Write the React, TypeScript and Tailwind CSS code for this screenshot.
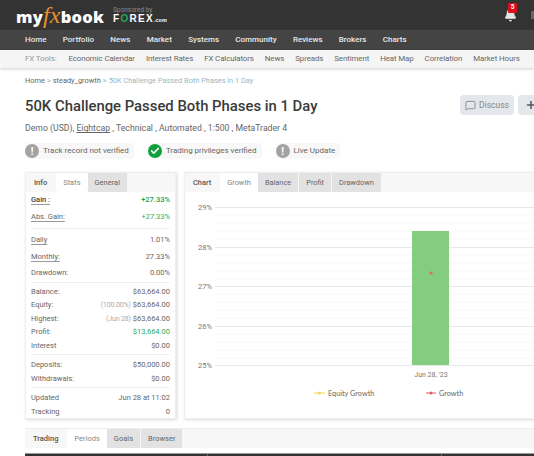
import React from 'react';
import { Bell, MessageSquare, Plus, Check } from 'lucide-react';

const mainNav = ['Home', 'Portfolio', 'News', 'Market', 'Systems', 'Community', 'Reviews', 'Brokers', 'Charts'];
const tools = ['Economic Calendar', 'Interest Rates', 'FX Calculators', 'News', 'Spreads', 'Sentiment', 'Heat Map', 'Correlation', 'Market Hours'];

function Tab({ label, kind }: { label: string; kind: 'title' | 'active' | 'idle' }) {
    if (kind === 'title') return <div className="h-full pl-[8px] pr-[9px] flex items-center font-medium text-[#555]">{label}</div>;
    if (kind === 'active') return <div className="h-full px-[7px] flex items-center bg-white text-[#888]">{label}</div>;
    return <div className="h-full px-[7px] flex items-center bg-[#e2e2e2] text-[#666] mr-px">{label}</div>;
}

function Row({ label, value, under, tone, note, h = 'h-[13.5px]', bold }: { label: string; value: string; under?: boolean; tone?: string; note?: string; h?: string; bold?: boolean }) {
    return (
        <div className={`flex items-center justify-between ${h}`}>
            <span className={`${under ? 'underline underline-offset-2 decoration-[#999]' : ''} ${bold ? 'font-medium text-[#444]' : 'text-[#666]'}`}>{label}</span>
            <span className={tone ?? 'text-[#666]'}>
                {note && <span className="text-[#aaa] text-[7px] tracking-[-0.15px] mr-[2px]">{note}</span>}
                {value}
            </span>
        </div>
    );
}

function Badge({ ok, children }: { ok?: boolean; children: React.ReactNode }) {
    return (
        <div className="flex items-center h-[16px] gap-[4px] bg-[#f8f8f8] pr-[5px] rounded-sm text-[8px] text-[#666] whitespace-nowrap">
            <span className={`size-[14px] rounded-full flex items-center justify-center text-white font-bold text-[10px] ${ok ? 'bg-[#10a03c]' : 'bg-[#a3a3a3]'}`}>
                {ok ? <Check size={10} strokeWidth={4} /> : '!'}
            </span>
            {children}
        </div>
    );
}

function GrowthChart() {
    const ticks = [
        { y: 34, label: '29%' },
        { y: 74, label: '28%' },
        { y: 113, label: '27%' },
        { y: 153, label: '26%' },
        { y: 192, label: '25%' },
    ];
    return (
        <svg width="356" height="228" className="block">
            {ticks.slice(0, 4).map((t, i) => (
                <g key={i} stroke="#f8f8f8">
                    <line x1="30" x2="356" y1={t.y + 8} y2={t.y + 8} />
                    <line x1="30" x2="356" y1={t.y + 16} y2={t.y + 16} />
                    <line x1="30" x2="356" y1={t.y + 24} y2={t.y + 24} />
                    <line x1="30" x2="356" y1={t.y + 32} y2={t.y + 32} />
                </g>
            ))}
            {ticks.map(t => (
                <g key={t.label}>
                    <line x1="30" x2="356" y1={t.y + 0.5} y2={t.y + 0.5} stroke="#e6e9e9" />
                    <text x="27" y={t.y + 3} textAnchor="end" fontSize="7.5" fill="#777" fontFamily="Roboto, sans-serif">{t.label}</text>
                </g>
            ))}
            <rect x="227" y="58" width="37" height="134" fill="#84cd80" />
            <circle cx="246" cy="100" r="1.6" fill="#d9705a" />
            <text x="246" y="204" textAnchor="middle" fontSize="7" fill="#777" fontFamily="Roboto, sans-serif">Jun 28, '23</text>
            <line x1="129" x2="140" y1="220" y2="220" stroke="#f2d55c" />
            <circle cx="134.5" cy="220" r="1.5" fill="#f2d55c" />
            <text x="143" y="223" fontSize="7.3" fill="#666" fontFamily="Lato, sans-serif">Equity Growth</text>
            <line x1="241" x2="251" y1="220" y2="220" stroke="#e0566a" />
            <circle cx="246" cy="220" r="1.5" fill="#e0566a" />
            <text x="254" y="223" fontSize="7.3" fill="#666" fontFamily="Lato, sans-serif">Growth</text>
        </svg>
    );
}

export default function App() {
    return (
        <div className="w-[534px] h-[456px] overflow-hidden bg-white font-['Roboto',sans-serif]">
            <header className="h-[30px] bg-[#333333] flex items-center pl-[16px] relative">
                <div className="w-[87px] font-['Open_Sans',sans-serif] font-extrabold text-[16.5px] tracking-[0.2px] text-white leading-none whitespace-nowrap">
                    my<span className="text-[#e8922a] italic font-['Liberation_Serif',serif] font-normal text-[24px] leading-none">fx</span>book
                </div>
                <div className="ml-[10px] flex flex-col whitespace-nowrap">
                    <span className="text-[6.5px] leading-[8px] text-[#8a8a8a]">Sponsored by</span>
                    <span className="text-[10px] leading-[10px] font-bold text-white tracking-[1.3px] font-['Liberation_Sans',sans-serif]">
                        F<span className="text-[#26a65b]">O</span>REX<span className="text-[5.5px] tracking-normal">.com</span>
                    </span>
                </div>
                <div className="absolute left-[504px] top-[9px]">
                    <Bell size={13} className="text-[#e5e5e5] fill-[#e5e5e5]" />
                    <span className="absolute -top-[6px] left-[4px] w-[9px] h-[10px] bg-[#d9101c] rounded-[1px] text-white text-[6.5px] font-bold flex items-center justify-center">5</span>
                </div>
                <div className="absolute left-[531px] top-[11px] w-[4px] h-[8px] bg-[#666]" />
            </header>

            <nav className="h-[20px] bg-[#444444] flex items-center pl-[25px] gap-[16.3px] text-[8px] font-medium text-[#e8e8e8] whitespace-nowrap">
                {mainNav.map(n => <span key={n}>{n}</span>)}
            </nav>

            <div className="h-[18px] bg-[#f5f5f5] shadow-[0_1px_3px_rgba(0,0,0,0.2)] flex items-center pl-[25px] text-[7.9px] tracking-[-0.1px] text-[#666] whitespace-nowrap">
                <span className="text-[#999] mr-[12px]">FX Tools:</span>
                <div className="flex gap-[11px]">
                    {tools.map(t => <span key={t}>{t}</span>)}
                </div>
            </div>

            <div className="pl-[25px] pt-[4px] h-[21px] text-[7.4px] text-[#666] whitespace-nowrap flex items-center gap-[2px]">
                <span>Home</span>
                <span className="text-[#aaa]">&gt;</span>
                <span>steady_growth</span>
                <span className="text-[#aaa]">&gt;</span>
                <span className="text-[#9cb7c6]">50K Challenge Passed Both Phases in 1 Day</span>
            </div>

            <div className="pl-[25px] flex items-start justify-between mt-[7px] h-[24px]">
                <h1 className="text-[14.85px] leading-[20px] font-medium text-[#3a3a3a] whitespace-nowrap">50K Challenge Passed Both Phases in 1 Day</h1>
                <div className="flex gap-[4px] shrink-0 -mr-[9px] mt-[-1px]">
                    <div className="h-[20px] w-[54px] bg-[#e4e8ec] rounded-sm flex items-center justify-center gap-[3px] text-[8.5px] text-[#888]">
                        <MessageSquare size={11} /> Discuss
                    </div>
                    <div className="h-[20px] w-[25px] bg-[#e4e8ec] rounded-sm flex items-center justify-center text-[#555]">
                        <Plus size={12} strokeWidth={3} />
                    </div>
                </div>
            </div>

            <div className="pl-[25px] mt-[2px] h-[14px] text-[8.7px] text-[#666] flex items-center whitespace-nowrap">
                Demo (USD),&nbsp;<span className="underline">Eightcap</span>&nbsp;, Technical , Automated , 1:500 , MetaTrader 4
            </div>

            <div className="pl-[25px] mt-[7px] flex items-center gap-[14px]">
                <Badge>Track record not verified</Badge>
                <Badge ok>Trading privileges verified</Badge>
                <Badge>Live Update</Badge>
            </div>

            <div className="pl-[25px] mt-[13px] flex gap-[8px] w-[560px]">
                <section className="w-[151px] h-[247px] bg-white border border-[#eee] shadow-[1px_1px_3px_rgba(0,0,0,0.15)] text-[7.5px] flex flex-col shrink-0">
                    <div className="h-[19px] bg-[#f7f7f7] flex text-[7.5px]">
                        <Tab label="Info" kind="title" />
                        <Tab label="Stats" kind="active" />
                        <Tab label="General" kind="idle" />
                    </div>
                    <div className="px-[5px] flex flex-col">
                        <Row label="Gain :" value="+27.33%" under bold tone="text-[#1aa34a] font-medium" h="h-[17px]" />
                        <Row label="Abs. Gain:" value="+27.33%" under tone="text-[#27ae60]" h="h-[17px]" />
                        <div className="h-px bg-[#f0f0f0] mt-[2px] mb-[3px]" />
                        <Row label="Daily" value="1.01%" under h="h-[17px]" />
                        <Row label="Monthly:" value="27.33%" under h="h-[17px]" />
                        <Row label="Drawdown:" value="0.00%" h="h-[14px]" />
                        <div className="h-px bg-[#f0f0f0] my-[2px]" />
                        <Row label="Balance:" value="$63,664.00" />
                        <Row label="Equity:" value="$63,664.00" note="(100.00%)" />
                        <Row label="Highest:" value="$63,664.00" note="(Jun 28)" />
                        <Row label="Profit:" value="$13,664.00" tone="text-[#27ae60]" />
                        <Row label="Interest" value="$0.00" />
                        <div className="h-px bg-[#f0f0f0] mt-[2px] mb-[3px]" />
                        <Row label="Deposits:" value="$50,000.00" />
                        <Row label="Withdrawals:" value="$0.00" />
                        <div className="h-px bg-[#f0f0f0] mt-[2px] mb-[3px]" />
                        <Row label="Updated" value="Jun 28 at 11:02" />
                        <Row label="Tracking" value="0" />
                    </div>
                </section>

                <section className="flex-1 h-[247px] bg-white border border-[#eee] shadow-[1px_1px_3px_rgba(0,0,0,0.15)] text-[7.4px] overflow-hidden">
                    <div className="h-[19px] bg-[#f7f7f7] flex">
                        <Tab label="Chart" kind="title" />
                        <Tab label="Growth" kind="active" />
                        <Tab label="Balance" kind="idle" />
                        <Tab label="Profit" kind="idle" />
                        <Tab label="Drawdown" kind="idle" />
                    </div>
                    <div className="-mt-[19px]">
                        <GrowthChart />
                    </div>
                </section>
            </div>

            <div className="mt-[9px] ml-[25px] h-[20px] w-[520px] bg-[#f7f7f7] border-t border-[#eee] flex text-[7.5px]">
                <Tab label="Trading" kind="title" />
                <Tab label="Periods" kind="active" />
                <Tab label="Goals" kind="idle" />
                <Tab label="Browser" kind="idle" />
            </div>
            <div className="mt-[5px] ml-[25px] h-[10px] bg-[#333] border-t border-[#999] flex">
                <div className="w-[183px] border-r border-[#666]" />
                <div className="w-[234px] border-r border-[#666]" />
            </div>
        </div>
    );
}
